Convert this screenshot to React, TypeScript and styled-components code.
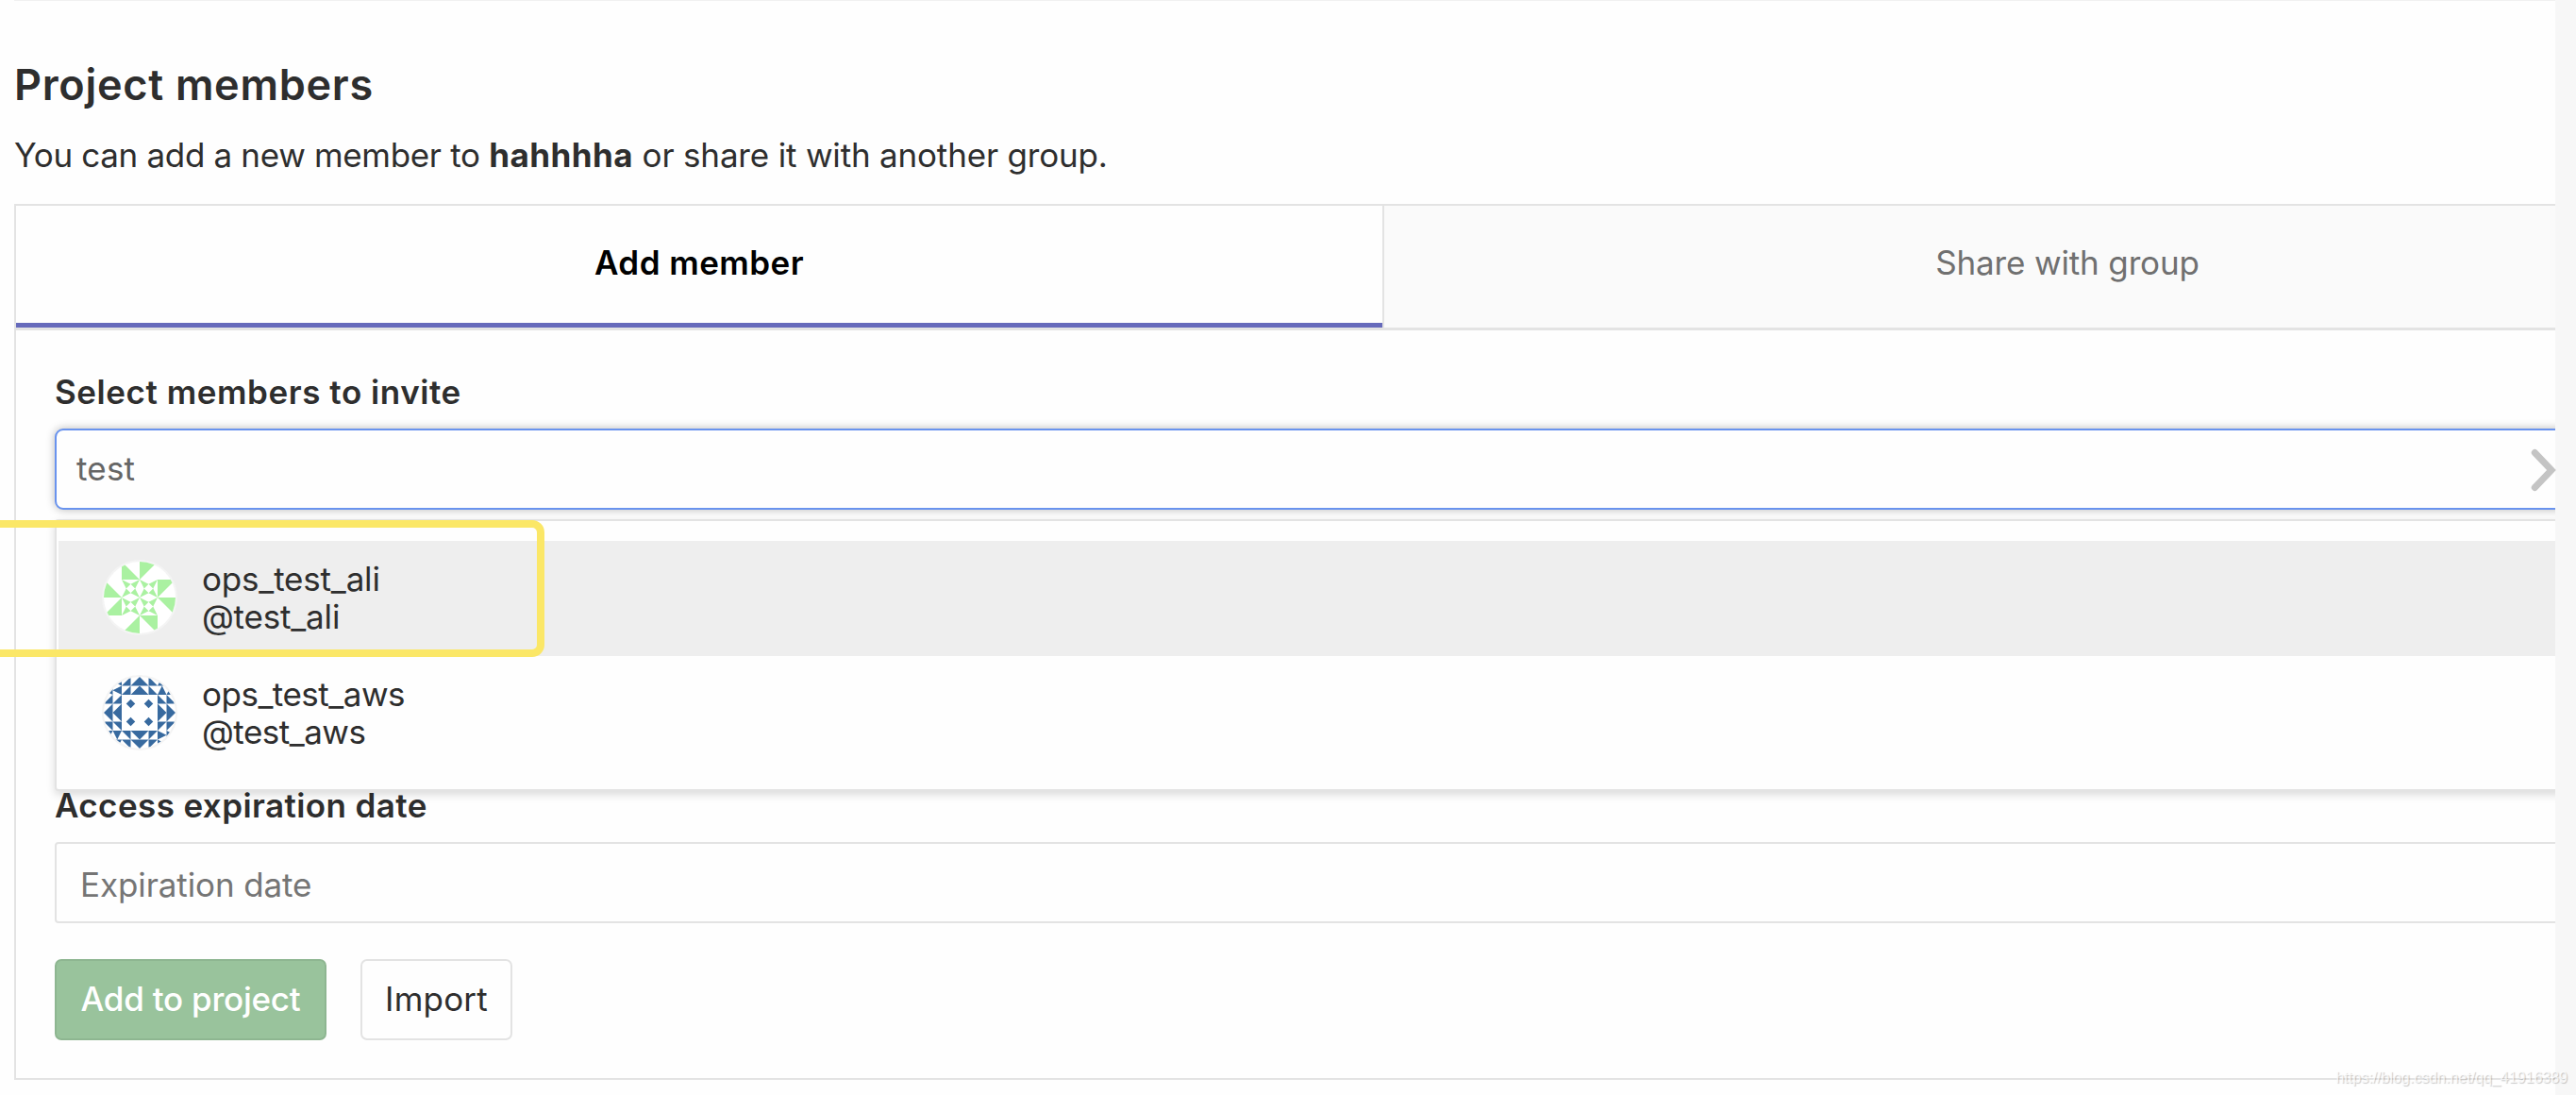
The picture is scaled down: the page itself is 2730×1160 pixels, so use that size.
import React from "react";
import styled, { createGlobalStyle } from "styled-components";

const colors = {
  text: "#2e2e2e",
  grey: "#707070",
  border: "#e3e3e3",
  purple: "#666abb",
  blue: "#6993ee",
  green: "#99c39c",
  yellow: "#fbe767",
};

const GlobalStyle = createGlobalStyle`
  * {
    box-sizing: border-box;
  }

  body {
    margin: 0;
    background: #f7f7f7;
    font-family: Inter, "Liberation Sans", sans-serif;
    font-size: 35px;
    line-height: 44px;
    color: ${colors.text};
  }
`;

const Page = styled.div`
  position: relative;
  width: 2730px;
  height: 1160px;
  overflow: hidden;
`;

const Content = styled.main`
  position: relative;
  width: 2708px;
  height: 1160px;
  padding: 62px 0 0 15px;
  overflow: hidden;
  background: linear-gradient(#f1f1f1, #f1f1f1) 15px 0 / 100% 1px no-repeat #fefefe;
`;

const Title = styled.h4`
  margin: 0 0 24px;
  font-size: 45px;
  line-height: 56px;
  font-weight: 600;
  letter-spacing: 0.72px;
`;

const Intro = styled.p`
  margin: 0 0 30px;
  letter-spacing: -0.18px;
  white-space: pre;

  span {
    letter-spacing: -0.33px;
  }

  strong {
    font-weight: 700;
    letter-spacing: 0.45px;
  }
`;

const Panel = styled.section`
  width: 2902px;
  height: 928px;
  border: 2px solid ${colors.border};
`;

const Tabs = styled.div`
  display: flex;
  height: 132px;
  border-bottom: 3px solid ${colors.border};
`;

const Tab = styled.div<{ $active?: boolean }>`
  flex: none;
  width: 1450px;
  padding-top: 38px;
  text-align: center;
  color: ${({ $active }) => ($active ? "#000" : colors.grey)};
  font-weight: ${({ $active }) => ($active ? 600 : 400)};
  letter-spacing: ${({ $active }) => ($active ? "0.45px" : "-0.15px")};
  background: ${({ $active }) => ($active ? "#fefefe" : "#fafafa")};
  border-right: 2px solid ${colors.border};
  box-shadow: ${({ $active }) => ($active ? `inset 0 -5px 0 ${colors.purple}` : "none")};
`;

const Form = styled.div`
  padding: 43px 41px 0;
`;

const Label = styled.div<{ $spacing: number }>`
  margin-bottom: 17px;
  font-weight: 600;
  letter-spacing: ${({ $spacing }) => $spacing}px;
`;

const SelectBox = styled.div`
  position: relative;
  margin-bottom: 291px;
`;

const Field = styled.div<{ $focused?: boolean }>`
  height: 86px;
  padding: ${({ $focused }) => ($focused ? "18px 21px" : "21px 25px")};
  border: 2px solid ${({ $focused }) => ($focused ? colors.blue : colors.border)};
  border-radius: ${({ $focused }) => ($focused ? 9 : 4)}px;
  background: #fefefe;
  color: ${({ $focused }) => ($focused ? "#666" : "#757575")};
  letter-spacing: ${({ $focused }) => ($focused ? 0.2 : -0.1)}px;
  box-shadow: ${({ $focused }) => ($focused ? "0 0 10px rgba(0, 0, 0, 0.28)" : "none")};
`;

const Menu = styled.div`
  position: absolute;
  top: 96px;
  left: 0;
  width: 100%;
  height: 288px;
  padding: 21px 2px;
  border: 2px solid ${colors.border};
  border-radius: 4px;
  background: #fefefe;
  box-shadow: 0 4px 10px rgba(0, 0, 0, 0.14);
`;

const MenuItem = styled.div<{ $highlighted?: boolean }>`
  display: flex;
  gap: 26px;
  height: 121.5px;
  padding: 20px 46px;
  line-height: 40px;
  letter-spacing: ${({ $highlighted }) => ($highlighted ? -0.18 : -0.5)}px;
  background: ${({ $highlighted }) => ($highlighted ? "#eee" : "transparent")};
`;

const AvatarSvg = styled.svg`
  flex: none;
  width: 80px;
  height: 80px;
`;

const Actions = styled.div`
  display: flex;
  gap: 36px;
  margin-top: 38px;
`;

const Button = styled.button<{ $primary?: boolean }>`
  width: ${({ $primary }) => ($primary ? 288 : 161)}px;
  height: 86px;
  padding: 0 0 2px;
  border: 2px solid ${({ $primary }) => ($primary ? "#8eb691" : colors.border)};
  border-radius: 7px;
  font: inherit;
  font-weight: ${({ $primary }) => ($primary ? 500 : 400)};
  letter-spacing: ${({ $primary }) => ($primary ? -0.25 : 0.2)}px;
  color: ${({ $primary }) => ($primary ? "#fff" : colors.text)};
  background: ${({ $primary }) => ($primary ? colors.green : "#fefefe")};
`;

// sits across the edge of the content, so it is placed over both
const Chevron = styled.svg`
  position: absolute;
  left: 2680px;
  top: 474px;
  width: 32px;
  height: 48px;
`;

const Marker = styled.div`
  position: absolute;
  left: -20px;
  top: 551px;
  width: 597px;
  height: 145px;
  border: 8px solid ${colors.yellow};
  border-radius: 13px;
`;

const Watermark = styled.div`
  position: absolute;
  right: 9px;
  bottom: 8px;
  font: 16px/20px "Liberation Sans", sans-serif;
  color: rgba(255, 255, 255, 0.75);
  text-shadow: 1px 1px 1px rgba(0, 0, 0, 0.22);
`;

const turns = [0, 90, 180, 270];

const PinwheelAvatar = () => (
  <AvatarSvg viewBox="0 0 80 80">
    <circle cx="40" cy="40" r="40" fill="#f4f4f4" />
    <circle cx="40" cy="40" r="38" fill="#fff" />
    <clipPath id="pinwheel">
      <circle cx="40" cy="40" r="38" />
    </clipPath>
    <g clipPath="url(#pinwheel)">
      <g transform="translate(2 2) scale(19)" fill="#aaf1a1">
        {turns.map((deg) => (
          <path
            key={deg}
            transform={`rotate(${deg} 2 2)`}
            d="M1 0V1H2ZM2 0H3L2 1Z"
          />
        ))}
        {[[1, 1], [2, 1], [1, 2], [2, 2]].map(([x, y]) => (
          <path
            key={`${x}${y}`}
            transform={`translate(${x} ${y})`}
            d="M0 0L.5 .25L.25 .5ZM1 0L.75 .5L.5 .25ZM1 1L.5 .75L.75 .5ZM0 1L.25 .5L.5 .75Z"
          />
        ))}
      </g>
    </g>
  </AvatarSvg>
);

const halves = [[0, 0], [0.5, 0], [0, 0.5], [0.5, 0.5]];

const MosaicAvatar = () => (
  <AvatarSvg viewBox="0 0 80 80">
    <circle cx="40" cy="40" r="40" fill="#f4f4f4" />
    <circle cx="40" cy="40" r="38" fill="#fff" />
    <clipPath id="mosaic">
      <circle cx="40" cy="40" r="38" />
    </clipPath>
    <g clipPath="url(#mosaic)">
      <g transform="translate(2 2) scale(19)" fill="#386a9f">
        {turns.map((deg) => (
          <g key={deg} transform={`rotate(${deg} 2 2)`}>
            {halves.map(([x, y]) => (
              <g key={`${x}${y}`} transform={`translate(${x} ${y})`}>
                <path d="M1 .5H1.5V0Z" />
                <path d="M2 0V.5H2.5Z" />
                <path d="M3 .5L3.25 0L3.5 .5Z" />
              </g>
            ))}
            <path d="M1.5 1.25L1.75 1.5L1.5 1.75L1.25 1.5Z" />
          </g>
        ))}
      </g>
    </g>
  </AvatarSvg>
);

type MemberProps = {
  name: string;
  handle: string;
  avatar: React.ReactNode;
  highlighted?: boolean;
};

const Member = ({ name, handle, avatar, highlighted }: MemberProps) => (
  <MenuItem $highlighted={highlighted}>
    {avatar}
    <div>
      <div>{name}</div>
      <div>{handle}</div>
    </div>
  </MenuItem>
);

const App = () => (
  <Page>
    <GlobalStyle />
    <Content>
      <Title>Project members</Title>
      <Intro>
        <span>You can add a new member to </span>
        <strong>hahhhha</strong> or share it with another group.
      </Intro>
      <Panel>
        <Tabs>
          <Tab $active>Add member</Tab>
          <Tab>Share with group</Tab>
        </Tabs>
        <Form>
          <Label $spacing={0.55}>Select members to invite</Label>
          <SelectBox>
            <Field $focused>test</Field>
            <Menu>
              <Member
                name="ops_test_ali"
                handle="@test_ali"
                avatar={<PinwheelAvatar />}
                highlighted
              />
              <Member
                name="ops_test_aws"
                handle="@test_aws"
                avatar={<MosaicAvatar />}
              />
            </Menu>
          </SelectBox>
          <Label $spacing={0.4}>Access expiration date</Label>
          <Field>Expiration date</Field>
          <Actions>
            <Button $primary>Add to project</Button>
            <Button>Import</Button>
          </Actions>
        </Form>
      </Panel>
    </Content>
    <Chevron viewBox="0 0 32 48">
      <path
        d="M6.3 5.5L24 24L6.3 42.5"
        fill="none"
        stroke="#c4c4c4"
        strokeWidth="7"
        strokeLinecap="round"
      />
    </Chevron>
    <Marker />
    <Watermark>https://blog.csdn.net/qq_41916389</Watermark>
  </Page>
);

export default App;
